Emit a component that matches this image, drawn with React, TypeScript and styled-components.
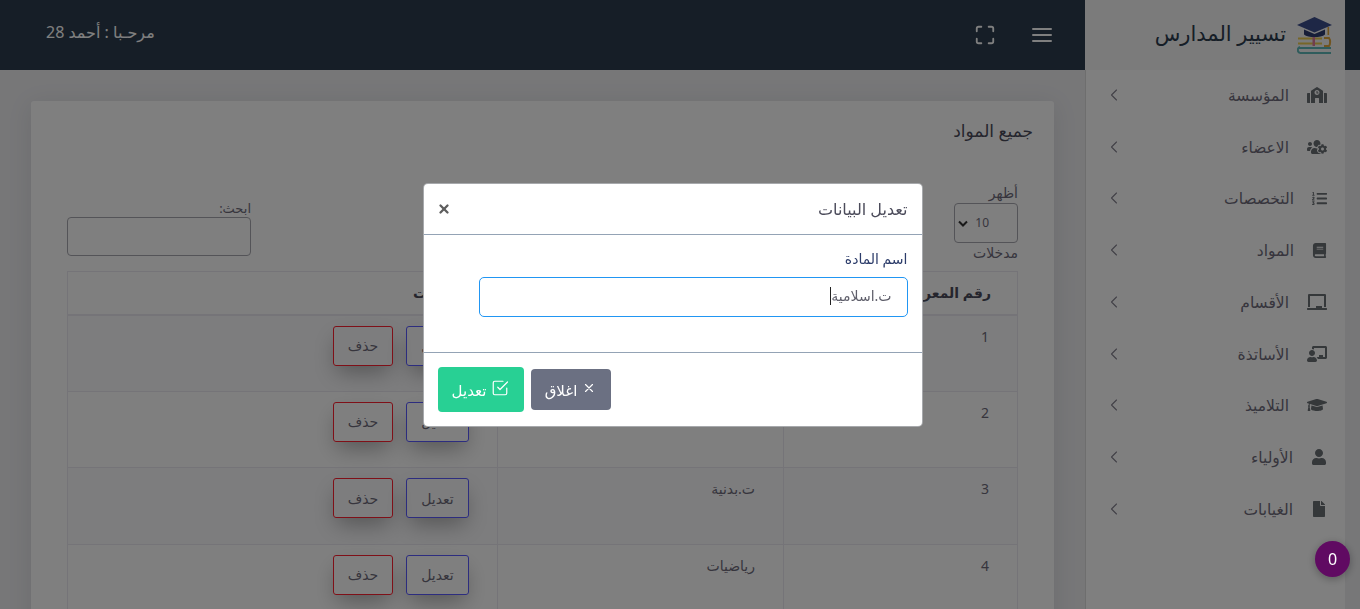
import React from "react";
import styled, { createGlobalStyle } from "styled-components";
import { ChevronLeft, X } from "lucide-react";
import {
  FaSchool,
  FaUsersCog,
  FaListOl,
  FaBook,
  FaChalkboard,
  FaChalkboardTeacher,
  FaGraduationCap,
  FaUser,
  FaFile,
} from "react-icons/fa";

const fontStack = `"Noto Sans", "DejaVu Sans", "Liberation Sans", sans-serif`;

const Global = createGlobalStyle`
  html, body { margin: 0; padding: 0; height: 100%; overflow: hidden; }
  * { box-sizing: border-box; }
  body { font-family: ${fontStack}; font-size: 14px; color: #6e6b7b; background: #eeeef1; }
`;

const Page = styled.div`
  direction: rtl;
  height: 609px;
  overflow: hidden;
  display: flex;
  flex-direction: column;
`;

const TopRow = styled.header`
  height: 70px;
  flex: none;
  display: flex;
  background: #2c3c4e;
  padding-right: 15px;
`;

const Brand = styled.div`
  width: 260px;
  flex: none;
  display: flex;
  align-items: center;
  gap: 11px;
  padding-right: 13px;
  background: #f7f7f7;
  font-size: 21px;
  color: #2c3c4e;
`;

const BrandName = styled.span`
  margin-top: -4px;
`;

const TopNav = styled.div`
  flex: 1;
  display: flex;
  align-items: center;
  gap: 34px;
  color: #fff;
  padding: 0 31px 0 46px;
`;

const IconButton = styled.span`
  display: flex;
  color: #fff;
`;

const Welcome = styled.span`
  margin-right: auto;
  margin-top: -7px;
  font-size: 16px;
  color: #fff;
`;

const Body = styled.div`
  flex: 1;
  min-height: 0;
  display: flex;
  padding-right: 15px;
`;

const Sidebar = styled.nav`
  width: 260px;
  flex: none;
  background: #fff;
  border-left: 1px solid #ddd;
  display: flex;
  flex-direction: column;
`;

const NavList = styled.div`
  margin-top: -1px;
  display: flex;
  flex-direction: column;
`;

const NavItem = styled.div`
  height: 51.75px;
  display: flex;
  align-items: center;
  padding: 0 18px 0 18px;
  color: #6e6b7b;
  font-size: 15.5px;
`;

const NavIcon = styled.span`
  display: flex;
  color: #6a7075;
  margin-left: 18px;
`;

const NavChevron = styled(ChevronLeft)`
  margin-right: auto;
  color: #85828f;
`;

const Main = styled.main`
  flex: 1;
  min-width: 0;
  padding: 31px 31px 0;
`;

const Card = styled.section`
  background: #fff;
  border-radius: 3px;
  height: 700px;
  padding: 18px 21px 0;
  box-shadow: 0 4px 24px rgba(34, 41, 47, 0.1);
`;

const CardTitle = styled.h2`
  margin: 0 0 40px;
  font-size: 17px;
  font-weight: 400;
  color: #4b4b5a;
  line-height: 24px;
`;

const Toolbar = styled.div`
  display: flex;
  justify-content: space-between;
  align-items: flex-end;
  padding: 0 15px;
  margin-bottom: 8px;
`;

const LengthBox = styled.label`
  display: flex;
  flex-direction: column;
  align-items: flex-start;
  width: 64px;
  font-size: 14px;
  line-height: 20px;
  color: #6e6b7b;
`;

const SelectBox = styled.span`
  width: 64px;
  height: 40px;
  border: 1px solid #a8a8b0;
  border-radius: 4px;
  display: flex;
  align-items: center;
  justify-content: space-between;
  padding: 0 28px 0 3px;
  font-size: 12px;
  direction: ltr;
  flex-direction: row-reverse;
`;

const SelectChevron = styled.svg`
  width: 10px;
  height: 7px;
  color: #333;
  margin-right: -25px;
`;

const SearchBox = styled.label`
  display: flex;
  flex-direction: column;
  width: 184px;
  font-size: 13px;
  line-height: 18px;
  color: #6e6b7b;
  margin-bottom: 7px;
`;

const SearchInput = styled.span`
  display: block;
  height: 39px;
  border: 1px solid #a8a8b0;
  border-radius: 4px;
`;

const TableWrap = styled.div`
  padding: 0 15px;
`;

const Table = styled.table`
  width: 950px;
  table-layout: fixed;
  border-collapse: collapse;
  color: #6e6b7b;
`;

const HeadCell = styled.th`
  height: 43px;
  border: 1px solid #ebe9f1;
  border-bottom-width: 2px;
  padding: 0 26px;
  text-align: right;
  font-size: 14px;
  font-weight: 700;
  color: #4b4b5a;
  white-space: nowrap;
  overflow: hidden;
`;

const Row = styled.tr<{ $striped: boolean }>`
  background: ${(p) => (p.$striped ? "#fafafc" : "#fff")};
`;

const Cell = styled.td`
  height: 76.5px;
  border: 1px solid #ebe9f1;
  padding: 10px 28px;
  vertical-align: top;
  font-size: 14px;
  line-height: 21px;
`;

const Actions = styled.div`
  display: flex;
  gap: 13px;
`;

const OutlineButton = styled.span<{ $color: string; $width: number }>`
  width: ${(p) => p.$width}px;
  height: 40px;
  display: flex;
  align-items: center;
  justify-content: center;
  border: 1px solid ${(p) => p.$color};
  border-radius: 3px;
  font-size: 14px;
  color: #6e6b7b;
  box-shadow: 0 10px 22px -4px rgba(0, 0, 0, 0.32);
`;

const Overlay = styled.div`
  position: fixed;
  inset: 0;
  background: rgba(0, 0, 0, 0.5);
  display: flex;
  justify-content: center;
  align-items: flex-start;
  padding: 183px 15px 0 0;
  direction: rtl;
`;

const Modal = styled.div`
  width: 500px;
  height: 244px;
  background: #fff;
  border: 1px solid rgba(34, 41, 47, 0.4);
  border-radius: 5px;
  display: flex;
  flex-direction: column;
`;

const ModalHeader = styled.div`
  height: 51px;
  flex: none;
  display: flex;
  align-items: center;
  justify-content: space-between;
  padding: 0 14px 0 13px;
  border-bottom: 1px solid #94a3b5;
`;

const ModalTitle = styled.h5`
  margin: 0;
  font-size: 16px;
  font-weight: 400;
  color: #4b4b5a;
`;

const CloseIcon = styled(X)`
  color: #5e5e5e;
  stroke-width: 4;
`;

const ModalBody = styled.div`
  height: 118px;
  flex: none;
  padding: 13px 14px 0;
  border-bottom: 1px solid #94a3b5;
`;

const FieldLabel = styled.label`
  display: block;
  font-size: 14px;
  line-height: 22px;
  color: #2c3c6a;
  margin-bottom: 7px;
`;

const FieldInput = styled.div`
  width: 429px;
  height: 40px;
  display: flex;
  align-items: center;
  padding: 0 15px 3px;
  border: 1px solid #2196f3;
  border-radius: 5px;
  font-size: 14px;
  color: #5f5f6b;
`;

const Caret = styled.span`
  width: 1px;
  height: 18px;
  background: #222;
`;

const ModalFooter = styled.div`
  flex: 1;
  display: flex;
  align-items: center;
  justify-content: flex-end;
  gap: 7px;
  padding: 0 14px;
`;

const SolidButton = styled.span<{ $bg: string; $w: number; $h: number }>`
  width: ${(p) => p.$w}px;
  height: ${(p) => p.$h}px;
  display: flex;
  align-items: center;
  justify-content: center;
  gap: 5px;
  border-radius: 4px;
  background: ${(p) => p.$bg};
  color: #fff;
  font-size: 15px;
`;

const ButtonIcon = styled.svg`
  margin-top: -4px;
  fill: none;
  stroke: currentColor;
  stroke-linecap: round;
  stroke-linejoin: round;
`;

const Badge = styled.div`
  position: fixed;
  left: 1315px;
  top: 541px;
  width: 35px;
  height: 36px;
  border-radius: 50%;
  background: #600a62;
  color: #fff;
  font-size: 16px;
  display: flex;
  align-items: center;
  justify-content: center;
  box-shadow: 0 2px 8px rgba(0, 0, 0, 0.3);
`;

const Logo = () => (
  <svg width="35" height="37" viewBox="0 0 35 37" style={{ flex: "none" }}>
    <path d="M17.5 0 35 8 17.5 15.5 0 8Z" fill="#3d4e8c" />
    <path d="M7 12.5 17.5 17 28 12.5V17.5C24 21 11 21 7 17.5Z" fill="#2f3c70" />
    <path d="M30.5 10v8h1.6v-8Z" fill="#e0a63c" />
    <path d="M1 21.5h24M1 26.5h24" stroke="#efcd50" strokeWidth="2.2" fill="none" />
    <path d="M27 21h5c1.5 2 1.5 6 0 8h-5" stroke="#e2a83e" strokeWidth="2" fill="none" />
    <path d="M15.5 20h2.5v9h-2.5Z" fill="#e27a9c" />
    <path d="M1 31h33M3 36h31" stroke="#5fb8b8" strokeWidth="2.2" fill="none" />
    <path d="M3 30c-3 1-3 5 0 6" stroke="#5fb8b8" strokeWidth="2" fill="none" />
  </svg>
);

const MenuGlyph = () => (
  <svg width="24" height="24" viewBox="0 0 24 24" fill="none" stroke="currentColor" strokeWidth="2" strokeLinecap="round">
    <path d="M3 12h18M3 6h18M3 18h18" />
  </svg>
);

const MaximizeGlyph = () => (
  <svg width="22" height="22" viewBox="0 0 24 24" fill="none" stroke="currentColor" strokeWidth="2" strokeLinecap="round" strokeLinejoin="round">
    <path d="M8 3H5a2 2 0 0 0-2 2v3m18 0V5a2 2 0 0 0-2-2h-3m0 18h3a2 2 0 0 0 2-2v-3M3 16v3a2 2 0 0 0 2 2h3" />
  </svg>
);

const navItems = [
  { label: "المؤسسة", icon: <FaSchool size={20} /> },
  { label: "الاعضاء", icon: <FaUsersCog size={20} /> },
  { label: "التخصصات", icon: <FaListOl size={15} /> },
  { label: "المواد", icon: <FaBook size={15} /> },
  { label: "الأقسام", icon: <FaChalkboard size={20} /> },
  { label: "الأساتذة", icon: <FaChalkboardTeacher size={20} /> },
  { label: "التلاميذ", icon: <FaGraduationCap size={20} /> },
  { label: "الأولياء", icon: <FaUser size={16} /> },
  { label: "الغيابات", icon: <FaFile size={16} /> },
];

const rows = [
  { id: 1, name: "ت.اسلامية" },
  { id: 2, name: "لغة عربية" },
  { id: 3, name: "ت.بدنية" },
  { id: 4, name: "رياضيات" },
];

export default function App() {
  return (
    <>
      <Global />
      <Page>
        <TopRow>
          <Brand>
            <Logo />
            <BrandName>تسيير المدارس</BrandName>
          </Brand>
          <TopNav>
            <IconButton>
              <MenuGlyph />
            </IconButton>
            <IconButton>
              <MaximizeGlyph />
            </IconButton>
            <Welcome>مرحـبا : أحمد 28</Welcome>
          </TopNav>
        </TopRow>
        <Body>
          <Sidebar>
            <NavList>
              {navItems.map((item) => (
                <NavItem key={item.label}>
                  <NavIcon>{item.icon}</NavIcon>
                  <span>{item.label}</span>
                  <NavChevron size={20} strokeWidth={1.3} />
                </NavItem>
              ))}
            </NavList>
          </Sidebar>
          <Main>
            <Card>
              <CardTitle>جميع المواد</CardTitle>
              <Toolbar>
                <LengthBox>
                  <span>أظهر</span>
                  <SelectBox>
                    <span>10</span>
                    <SelectChevron viewBox="0 0 10 7">
                      <path d="M1 1.5 5 5.5 9 1.5" stroke="currentColor" strokeWidth="2" fill="none" />
                    </SelectChevron>
                  </SelectBox>
                  <span>مدخلات</span>
                </LengthBox>
                <SearchBox>
                  <span>ابحث:</span>
                  <SearchInput />
                </SearchBox>
              </Toolbar>
              <TableWrap>
                <Table>
                  <colgroup>
                    <col style={{ width: 234 }} />
                    <col style={{ width: 286 }} />
                    <col style={{ width: 430 }} />
                  </colgroup>
                  <thead>
                    <tr>
                      <HeadCell>رقم المعرف</HeadCell>
                      <HeadCell>اسم المادة</HeadCell>
                      <HeadCell>الخيارات</HeadCell>
                    </tr>
                  </thead>
                  <tbody>
                    {rows.map((r) => (
                      <Row key={r.id} $striped={r.id % 2 === 1}>
                        <Cell>{r.id}</Cell>
                        <Cell>{r.name}</Cell>
                        <Cell>
                          <Actions>
                            <OutlineButton $color="#5a5aff" $width={63}>تعديل</OutlineButton>
                            <OutlineButton $color="#ff2030" $width={60}>حذف</OutlineButton>
                          </Actions>
                        </Cell>
                      </Row>
                    ))}
                  </tbody>
                </Table>
              </TableWrap>
            </Card>
          </Main>
        </Body>
      </Page>
      <Overlay>
        <Modal>
          <ModalHeader>
            <ModalTitle>تعديل البيانات</ModalTitle>
            <CloseIcon size={14} />
          </ModalHeader>
          <ModalBody>
            <FieldLabel>اسم المادة</FieldLabel>
            <FieldInput>
              <span>ت.اسلامية</span>
              <Caret />
            </FieldInput>
          </ModalBody>
          <ModalFooter>
            <SolidButton $bg="#6b7082" $w={80} $h={41}>
              <ButtonIcon width="14" height="14" viewBox="0 0 24 24" strokeWidth="2">
                <path d="M18 6 6 18M6 6l12 12" />
              </ButtonIcon>
              <span>اغلاق</span>
            </SolidButton>
            <SolidButton $bg="#28d094" $w={86} $h={45}>
              <ButtonIcon width="18" height="18" viewBox="0 0 24 24" strokeWidth="1.6">
                <path d="m9 11 3 3L22 4" />
                <path d="M21 12v7a2 2 0 0 1-2 2H5a2 2 0 0 1-2-2V5a2 2 0 0 1 2-2h11" />
              </ButtonIcon>
              <span>تعديل</span>
            </SolidButton>
          </ModalFooter>
        </Modal>
      </Overlay>
      <Badge>0</Badge>
    </>
  );
}
